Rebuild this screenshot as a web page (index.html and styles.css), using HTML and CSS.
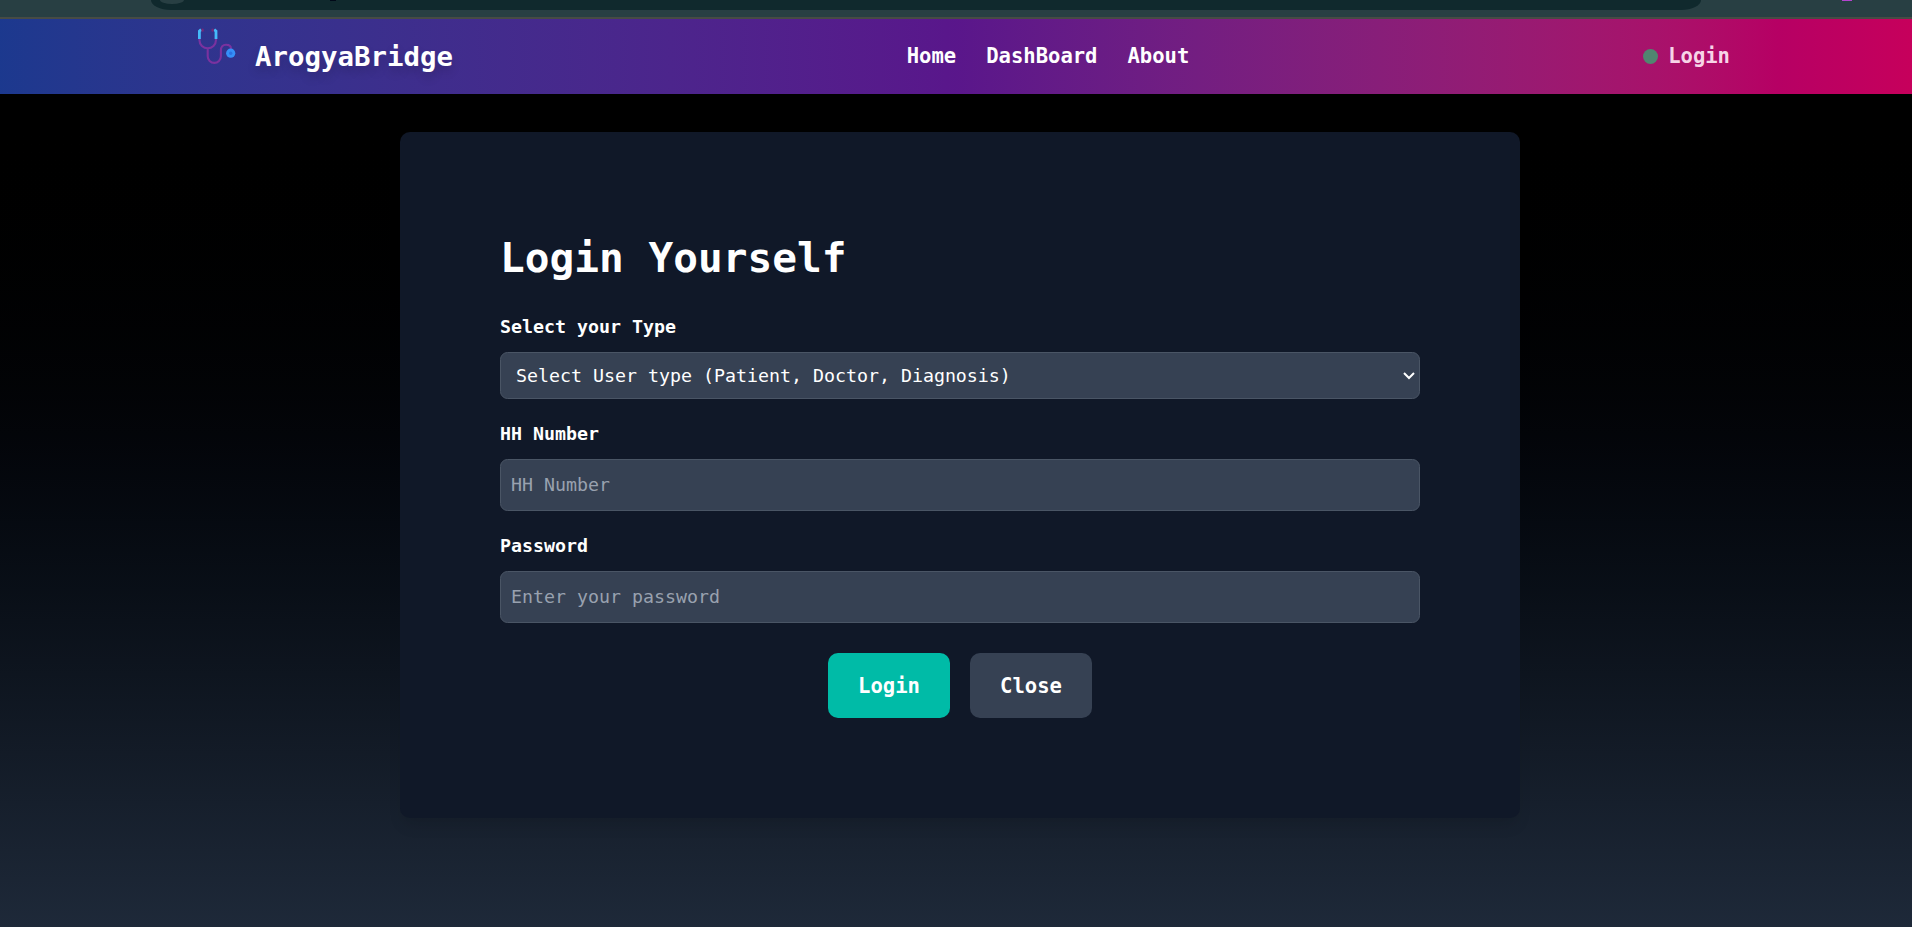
FILE: index.html
```html
<!DOCTYPE html>
<html lang="en">
<head>
<meta charset="utf-8">
<title>ArogyaBridge</title>
<link rel="stylesheet" href="styles.css">
</head>
<body>
<div class="browser-bar"><div class="address"><span class="address-icon"></span></div><i class="mark mark-text"></i><i class="mark mark-extension"></i></div>
<header class="header">
  <div class="brand">
    <svg class="logo" viewBox="0 0 40 38" fill="none" stroke-linecap="round">
      <path d="M2.5 11v1.5a8.2 7.8 0 0 0 16.4 0V11M10.7 20.3v8a6.6 6.6 0 0 0 13.2 0v-6c0-3.5 2-5.6 5.1-5.6 3 0 5 1.6 5 4" stroke="#7a329f" stroke-width="2.1"/>
      <path d="M2.4 11V3.2l1.8-1.8M19 11V3.2l-1.8-1.8" stroke="#45bbfa" stroke-width="2.8" stroke-linecap="butt"/>
      <path d="M5.6 1.7v.8M15.6 1.7v.8" stroke="#712a79" stroke-width="2.5"/>
      <circle cx="33.7" cy="25.2" r="4.6" fill="#358ff8"/>
      <circle cx="33.7" cy="25.2" r="1.7" fill="#2b71e3"/>
    </svg>
    <span class="brand-name">ArogyaBridge</span>
  </div>
  <nav class="nav"><a>Home</a><a>DashBoard</a><a>About</a></nav>
  <div class="account"><span class="dot"></span><a class="account-link">Login</a></div>
</header>
<main class="main">
  <form class="card">
    <h1 class="title">Login Yourself</h1>
    <label class="label">Select your Type</label>
    <div class="field select">Select User type (Patient, Doctor, Diagnosis)
      <svg class="chevron" viewBox="0 0 12 8"><path d="M1 1l5 5 5-5" fill="none" stroke="#fff" stroke-width="2"/></svg>
    </div>
    <label class="label">HH Number</label>
    <input class="field" type="text" placeholder="HH Number">
    <label class="label">Password</label>
    <input class="field" type="password" placeholder="Enter your password">
    <div class="actions"><button class="btn btn-login" type="button">Login</button><button class="btn btn-close" type="button">Close</button></div>
  </form>
</main>
</body>
</html>
```
FILE: styles.css
```css
* { box-sizing: border-box; }
body { margin: 0; height: 927px; overflow: hidden; display: flex; flex-direction: column; background: #1e2939; color: #fff; font-family: "DejaVu Sans Mono", monospace; font-size: 18.27px; }
.browser-bar { position: relative; height: 19px; flex: none; background: #283f43; border-bottom: 2px solid #474b45; padding-left: 151px; }
.address { width: 1550px; height: 10px; background: #10292d; border-radius: 0 0 20px 20px / 0 0 10px 10px; overflow: hidden; padding-left: 9px; }
.address-icon { display: block; width: 24px; height: 4px; border-radius: 0 0 12px 12px / 0 0 4px 4px; background: #283f43; }
.mark { position: absolute; top: 0; height: 1px; }
.mark-text { left: 330px; width: 6px; background: #000818; }
.mark-extension { left: 1842px; width: 10px; background: #b344ce; }
.header { height: 75px; flex: none; display: flex; justify-content: space-between; align-items: center; padding: 0 182px 0 197px; background: linear-gradient(to right in oklab, oklch(37.9% .146 265.522), oklch(38.1% .176 304.987), oklch(52.5% .223 3.958)); font-weight: 700; font-size: 20.55px; }
.brand { display: flex; align-items: center; height: 75px; }
.logo { width: 40px; height: 38px; margin: 0 18px 20px 0; }
.brand-name { font-size: 27.4px; text-shadow: 0 6px 10px rgba(0,0,0,.16); }
.nav { display: flex; gap: 30px; padding-bottom: 2px; }
.account { display: flex; align-items: center; gap: 10px; color: #f7d4e7; }
.account-link { padding-bottom: 1px; }
.dot { width: 15px; height: 15px; border-radius: 50%; background: #508670; }
.main { flex: 1; padding: 38px 0 0 400px; background: linear-gradient(to bottom in oklab, #000, #1e2939); }
.card { width: 1120px; height: 686px; padding: 100px; border-radius: 10px; background: #101828; box-shadow: 0 10px 15px -3px rgba(0,0,0,.1); }
.title { margin: 0 0 29px; padding-top: 1px; font-size: 41.1px; line-height: 50px; }
.label { display: block; line-height: 30px; margin-bottom: 10px; font-weight: 700; }
.field { display: block; width: 920px; height: 52px; margin-bottom: 20px; padding: 0 10px 2px; border: 1px solid #4a5565; border-radius: 7.5px; background: #364153; color: #fff; font: inherit; }
.field::placeholder { color: #99a1af; opacity: 1; }
.select { height: 47px; display: flex; align-items: center; justify-content: space-between; padding: 0 4px 0 15px; }
.chevron { width: 12px; height: 8px; }
.actions { display: flex; justify-content: center; gap: 20px; margin-top: 30px; }
.btn { width: 122px; height: 65px; border: 0; border-radius: 10px; color: #fff; font: 700 20.55px "DejaVu Sans Mono", monospace; }
.btn-login { background: #00bba7; }
.btn-close { background: #364153; }
```
